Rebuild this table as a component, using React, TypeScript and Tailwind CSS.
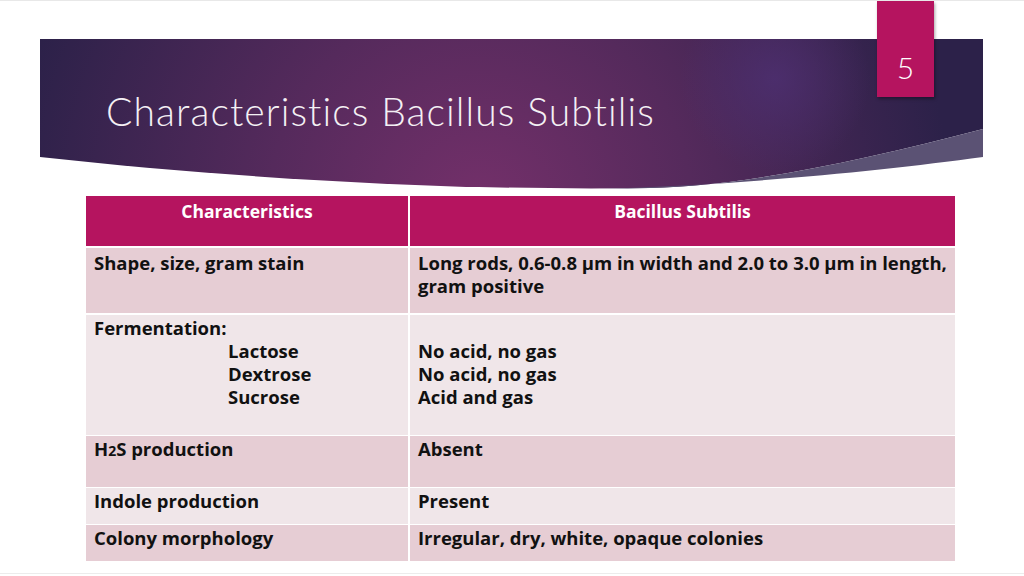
import React from 'react';

const rows = [
  {
    left: <span>Shape, size, gram stain</span>,
    right: (
      <span>
        Long rods, 0.6-0.8 µm in width and 2.0 to 3.0 µm in length,
        <br />
        gram positive
      </span>
    ),
    tone: 'bg-[#e6cdd4]',
    h: 'h-[65px]',
    pad: 'pt-[3px]',
  },
  {
    left: (
      <div>
        <div>Fermentation:</div>
        <div className="pl-[134px]">
          <div>Lactose</div>
          <div>Dextrose</div>
          <div>Sucrose</div>
        </div>
      </div>
    ),
    right: (
      <div className="pt-[23px]">
        <div>No acid, no gas</div>
        <div>No acid, no gas</div>
        <div>Acid and gas</div>
      </div>
    ),
    tone: 'bg-[#f0e6e9]',
    h: 'h-[120px]',
    pad: 'pt-[1px]',
  },
];

const narrowRows = [
  { left: 'H2S production', right: 'Absent', tone: 'bg-[#e6cdd4]', h: 'h-[51px]' },
  { left: 'Indole production', right: 'Present', tone: 'bg-[#f0e6e9]', h: 'h-[36px]' },
  { left: 'Colony morphology', right: 'Irregular, dry, white, opaque colonies', tone: 'bg-[#e6cdd4]', h: 'h-[36px]' },
];

function Banner() {
  return (
    <div className="relative mx-[40px] mt-[38px] h-[152px]">
      <svg className="absolute inset-0" width="943" height="152" viewBox="0 0 943 152">
        <defs>
          <radialGradient id="glow" gradientUnits="userSpaceOnUse" cx="440" cy="170" r="470">
            <stop offset="0" stopColor="#74306a" />
            <stop offset="0.45" stopColor="#552a5c" />
            <stop offset="1" stopColor="#2c2149" />
          </radialGradient>
          <radialGradient id="glow2" gradientUnits="userSpaceOnUse" cx="735" cy="40" r="95">
            <stop offset="0" stopColor="#4d2f70" stopOpacity="0.85" />
            <stop offset="1" stopColor="#4d2f70" stopOpacity="0" />
          </radialGradient>
        </defs>
        <path d="M0 0 H943 V90 C820 122 710 146 610 149 C420 152 200 140 0 118 Z" fill="url(#glow)" />
        <path d="M0 0 H943 V90 C820 122 710 146 610 149 C420 152 200 140 0 118 Z" fill="url(#glow2)" />
        <path d="M560 150 C700 146 840 132 943 118 V90 C820 122 710 146 610 149 Z" fill="#5b5274" />
      </svg>
      <h1 className="relative pl-[66px] pt-[53px] text-[39px] font-light leading-none text-[#f4f0f4] tracking-[1.1px] font-['Lato','Liberation_Sans',sans-serif]">
        Characteristics Bacillus Subtilis
      </h1>
    </div>
  );
}

export default function App() {
  return (
    <div className="relative w-[1024px] h-[576px] overflow-hidden bg-white border-t border-[#e8e8e8] font-['Open_Sans','DejaVu_Sans',sans-serif]">
      <Banner />

      <div className="absolute left-[877px] top-0 flex h-[96px] w-[57px] items-center justify-center bg-[#b5145f] shadow-[1px_2px_3px_rgba(0,0,0,0.35)]">
        <span className="pt-[36px] text-[30px] font-light text-white font-['Lato','Liberation_Sans',sans-serif]">5</span>
      </div>

      <div className="mx-[86px] mt-[5px] w-[869px] text-[18.5px] font-bold leading-[23px] text-[#111]">
        <div className="flex h-[50px] gap-[2px] bg-white text-[17.5px]">
          <div className="w-[322px] bg-[#b5145f] pt-[4px] text-center text-white">Characteristics</div>
          <div className="flex-1 bg-[#b5145f] pt-[4px] text-center text-white">Bacillus Subtilis</div>
        </div>
        {rows.map((r, i) => (
          <div key={i} className={`mt-[2px] flex gap-[2px] ${r.h}`}>
            <div className={`w-[322px] ${r.tone} px-[8px] ${r.pad}`}>{r.left}</div>
            <div className={`flex-1 ${r.tone} px-[8px] ${r.pad}`}>{r.right}</div>
          </div>
        ))}
        {narrowRows.map((r, i) => (
          <div key={i} className={`mt-[1px] flex gap-[2px] ${r.h}`}>
            <div className={`w-[322px] ${r.tone} px-[8px] pt-[1px]`}>
              <span className="whitespace-nowrap">
                {r.left === 'H2S production' ? (
                  <>
                    H<span className="text-[14px]">2</span>S production
                  </>
                ) : (
                  r.left
                )}
              </span>
            </div>
            <div className={`flex-1 ${r.tone} px-[8px] pt-[1px]`}>
              <span className="whitespace-nowrap">{r.right}</span>
            </div>
          </div>
        ))}
      </div>
      <div className="absolute bottom-[2px] left-0 h-px w-full bg-[#ececec]" />
    </div>
  );
}
